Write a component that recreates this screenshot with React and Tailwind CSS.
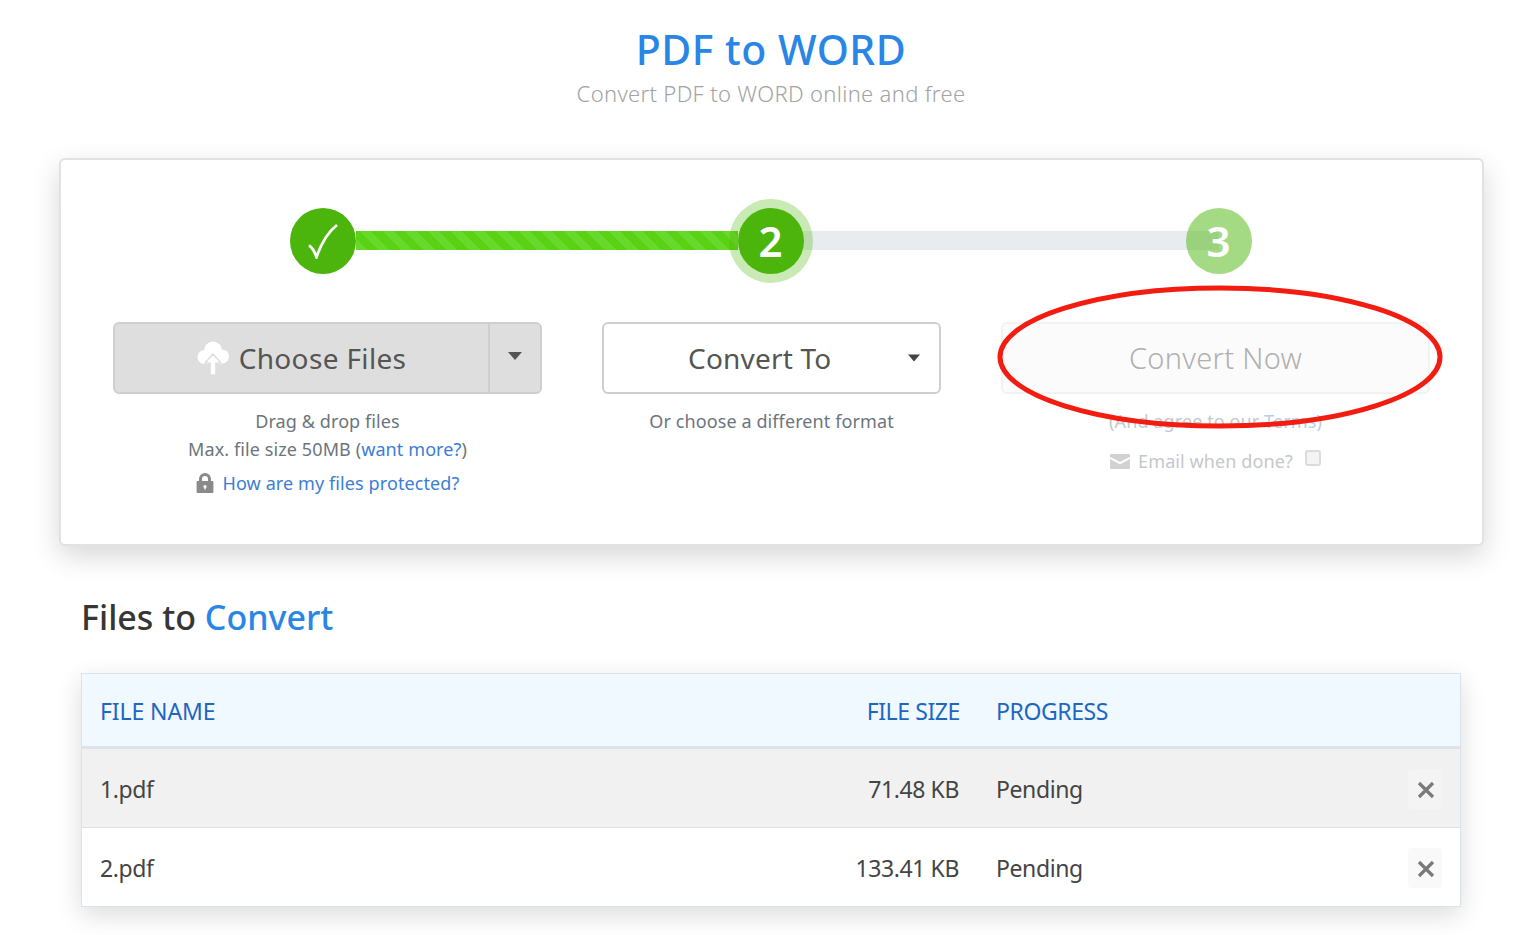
import React from 'react';

const files = [
  { name: '1.pdf', size: '71.48 KB', rowClass: 'h-[79px] bg-[#f1f1f1] border-b border-[#e0e0e0]', closeClass: 'bg-[#f4f4f4]' },
  { name: '2.pdf', size: '133.41 KB', rowClass: 'h-[78px] bg-white', closeClass: 'bg-[#f9f9f9]' },
];

const Caret = ({ className }) => (
  <svg className={className} width="14" height="8" viewBox="0 0 14 8">
    <path d="M0 0h14L7 8z" fill="currentColor" />
  </svg>
);

const CloudUpload = () => (
  <svg width="32" height="34" viewBox="0 0 32 34" className="shrink-0">
    <g fill="#fff">
      <circle cx="7.500" cy="16" r="7" />
      <circle cx="16" cy="9.500" r="9" />
      <circle cx="25" cy="15.500" r="7" />
      <rect x="7" y="14" width="18" height="9" />
    </g>
    <path
      d="M16 13l8 9h-5v12h-6V22H8z"
      fill="#fff"
      stroke="#dedede"
      strokeWidth="1.600"
      strokeLinejoin="round"
    />
  </svg>
);

const Lock = () => (
  <svg width="18" height="20" viewBox="0 0 18 20" className="shrink-0">
    <path
      d="M3 8V6a6 6 0 0 1 12 0v2h1.400c.6 0 1 .4 1 1v10c0 .6-.4 1-1 1H1.600c-.6 0-1-.4-1-1V9c0-.6.4-1 1-1zm3 0h6V6a3 3 0 0 0-6 0z"
      fill="#8a8a8a"
    />
    <circle cx="9" cy="13.500" r="1.600" fill="#fff" />
    <path d="M8.300 14h1.400v2.600H8.300z" fill="#fff" />
  </svg>
);

const Envelope = () => (
  <svg width="20" height="15" viewBox="0 0 20 15" className="shrink-0">
    <path d="M0 1.200C0 .5.5 0 1.200 0h17.600c.7 0 1.200.5 1.200 1.200v1.600L10 8 0 2.800z" fill="#d2d2d2" />
    <path d="M0 5l10 5.200L20 5v8.800c0 .7-.5 1.200-1.200 1.200H1.200C.5 15 0 14.500 0 13.800z" fill="#d2d2d2" />
  </svg>
);

const CloseIcon = () => (
  <svg width="18" height="18" viewBox="0 0 18 18">
    <path d="M2 2l14 14M16 2L2 16" stroke="#7a7a7a" strokeWidth="3.200" />
  </svg>
);

const Stepper = () => (
  <div className="flex items-center justify-center h-[84px] pr-[2px] text-white font-semibold text-[42px]">
    <div className="relative z-10 w-[66px] h-[66px] rounded-full bg-[#4cb50b] flex items-center justify-center shrink-0">
      <svg width="32" height="36" viewBox="0 0 32 36" fill="none">
        <path d="M2 22.500c2.500 1.500 5.500 6 7.500 11.500C14 21 21 9 30 2" stroke="#fff" strokeWidth="2.800" />
      </svg>
    </div>
    <div className="h-[19px] mt-[-2px] w-[382px] mr-[-9px] bg-[#58d212] bg-[repeating-linear-gradient(45deg,#68d92b_0px,#68d92b_8px,#58d212_8px,#58d212_16px)]" />
    <div className="relative z-10 w-[84px] h-[84px] rounded-full bg-[#4cb50b]/30 flex items-center justify-center shrink-0">
      <div className="w-[66px] h-[66px] rounded-full bg-[#4cb50b] flex items-center justify-center leading-none">2</div>
    </div>
    <div className="h-[19px] mt-[-2px] w-[416px] ml-[-10px] mr-[-33px] bg-[#e9ecee]" />
    <div className="relative z-10 w-[66px] h-[66px] rounded-full bg-[#4cb50b]/50 flex items-center justify-center leading-none shrink-0">3</div>
  </div>
);

export default function App() {
  return (
    <div className="relative h-[935px] overflow-hidden bg-white font-['Noto_Sans','Open_Sans',sans-serif]">
      <div className="pt-[22px] pl-[12px] text-center">
        <h1 className="text-[41px] leading-[54px] font-medium text-[#2a86e4] tracking-[0.5px]">PDF to WORD</h1>
        <p className="mt-[2px] text-[22px] leading-[30px] font-light text-[#a3a3a3] tracking-[0.33px]">Convert PDF to WORD online and free</p>
      </div>

      <div className="ml-[59px] mt-[50px] w-[1425px] h-[388px] rounded-md border-2 border-[#e2e2e2] bg-white shadow-[0_10px_28px_rgba(0,0,0,0.16)] pt-[39px]">
        <Stepper />

        <div className="mt-[39px] pl-[52px] flex gap-[60px]">
          <div className="w-[429px] text-center text-[18px] leading-[28px] text-[#6c757d] tracking-[0.1px]">
            <div className="h-[72px] flex rounded-md border-2 border-[#cfcfcf] bg-[#dedede] text-[#555]">
              <div className="flex-1 flex items-center justify-center gap-[10px] text-[28px] tracking-[0.35px]">
                <CloudUpload />
                <span>Choose Files</span>
              </div>
              <div className="w-[52px] border-l-2 border-[#cfcfcf] flex items-center justify-center">
                <Caret className="text-[#555] mb-[4px]" />
              </div>
            </div>
            <p className="mt-[13px]">Drag &amp; drop files</p>
            <p>Max. file size 50MB (<span className="text-[#3b7dd8]">want more?</span>)</p>
            <p className="mt-[6px] flex items-center justify-center gap-[9px] text-[#3b7dd8]">
              <Lock />
              How are my files protected?
            </p>
          </div>

          <div className="w-[339px] text-center text-[18px] leading-[28px] text-[#6c757d] tracking-[0.1px]">
            <div className="h-[72px] rounded-md border-2 border-[#cfcfcf] bg-white text-[#555] flex items-center gap-[77px] pl-[84px] text-[28px] tracking-[0.2px]">
              <span>Convert To</span>
              <Caret className="w-[12px] text-[#444]" />
            </div>
            <p className="mt-[13px]">Or choose a different format</p>
          </div>

          <div className="w-[429px] text-center text-[18px] leading-[28px] text-[#c4c8cc] tracking-[0.1px]">
            <div className="h-[72px] rounded-md border-2 border-[#f2f2f2] bg-[#fbfbfb] text-[#b0b0b0] flex items-center justify-center text-[29px] font-light tracking-[0.3px]">
              Convert Now
            </div>
            <p className="mt-[13px]">(And agree to our <span className="text-[#b3cdec]">Terms</span>)</p>
            <div className="mt-[12px] flex items-center justify-center gap-[8px]">
              <Envelope />
              <span>Email when done?</span>
              <span className="ml-[4px] mb-[6px] w-[16px] h-[16px] rounded-[3px] border-2 border-[#dcdcdc] bg-[#f4f4f4]" />
            </div>
          </div>
        </div>
      </div>

      <h2 className="ml-[81px] mt-[46px] text-[34px] leading-[50px] font-medium text-[#363636]">
        Files to <span className="text-[#2a86e4]">Convert</span>
      </h2>

      <div className="ml-[81px] mt-[31px] w-[1380px] border border-[#dbe3ea] bg-white shadow-[0_8px_24px_rgba(0,0,0,0.14)] text-[23px] tracking-[-0.4px]">
        <div className="h-[75px] flex items-center bg-[#f0f9ff] border-b-[3px] border-[#dde3ea] text-[#1f66c1] pl-[18px] pt-[2px]">
          <span className="w-[780px] tracking-[-0.1px]">FILE NAME</span>
          <span className="w-[80px] whitespace-nowrap flex justify-end">FILE SIZE</span>
          <span className="ml-[36px]">PROGRESS</span>
        </div>
        {files.map((file) => (
          <div key={file.name} className={`flex items-center pl-[18px] text-[#444] ${file.rowClass}`}>
            <span className="w-[779px] pt-[2px]">{file.name}</span>
            <span className="w-[80px] pt-[2px] whitespace-nowrap flex justify-end">{file.size}</span>
            <span className="ml-[37px] pt-[2px] flex-1">Pending</span>
            <button className={`mr-[18px] mt-[1px] pt-[3px] pl-[1px] w-[34px] h-[40px] flex items-center justify-center rounded-sm ${file.closeClass}`}>
              <CloseIcon />
            </button>
          </div>
        ))}
      </div>

      <svg className="absolute left-[990px] top-[280px] pointer-events-none" width="460" height="155" viewBox="0 0 460 155" fill="none">
        <ellipse cx="230" cy="77" rx="220" ry="69" stroke="#f21d10" strokeWidth="5" />
      </svg>
    </div>
  );
}
